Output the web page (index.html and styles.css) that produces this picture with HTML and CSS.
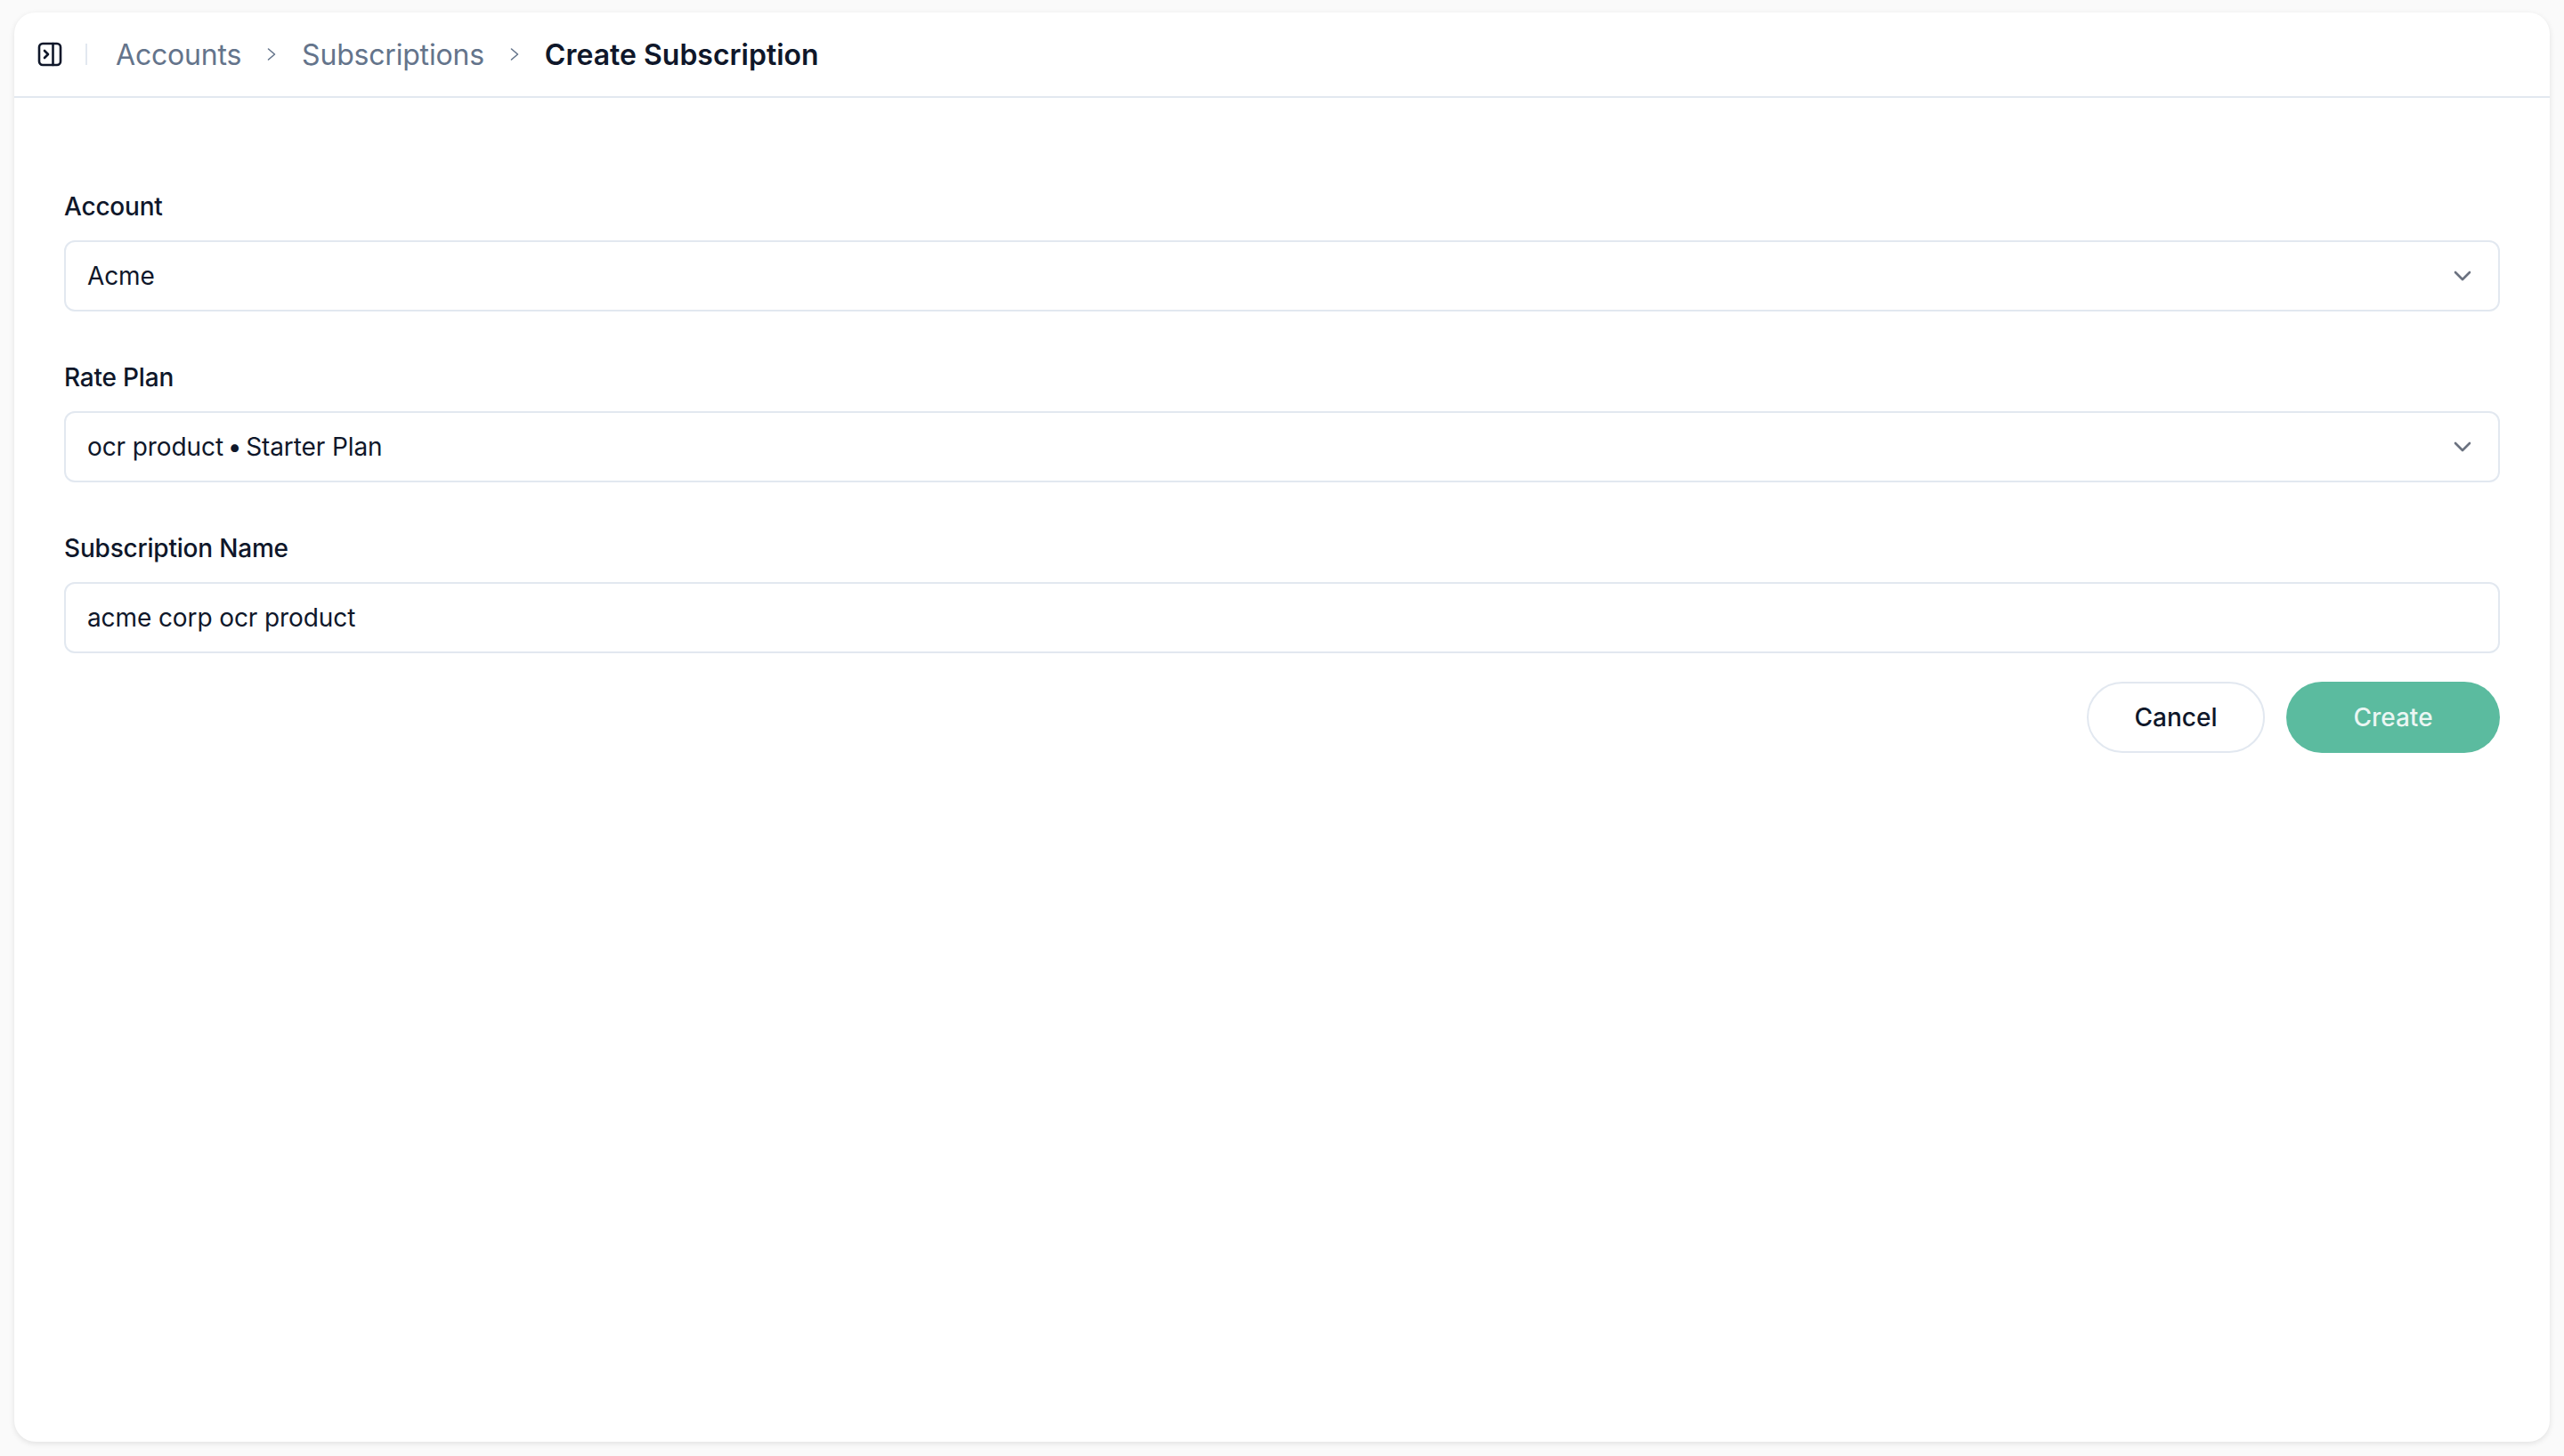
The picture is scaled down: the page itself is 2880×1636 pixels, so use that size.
FILE: index.html
```html
<!DOCTYPE html>
<html lang="en">
<head>
<meta charset="utf-8">
<title>Create Subscription</title>
<link rel="stylesheet" href="styles.css">
</head>
<body>
<main class="panel">
  <header class="topbar">
    <svg class="toggle" width="28" height="28" viewBox="0 0 28 28" fill="none" stroke="#0f172a" stroke-width="2.6" stroke-linecap="round" stroke-linejoin="round"><rect x="2" y="2" width="24" height="24" rx="4"/><path d="M17.5 2v24"/><path d="M8 10l4 4-4 4"/></svg>
    <span class="sep"></span>
    <nav class="crumbs">
      <a class="crumb">Accounts</a>
      <svg class="chev" width="16" height="16" viewBox="0 0 16 16" fill="none" stroke="#64748b" stroke-width="1.6" stroke-linecap="round" stroke-linejoin="round"><path d="M4.5 2l7 6-7 6"/></svg>
      <a class="crumb">Subscriptions</a>
      <svg class="chev" width="16" height="16" viewBox="0 0 16 16" fill="none" stroke="#64748b" stroke-width="1.6" stroke-linecap="round" stroke-linejoin="round"><path d="M4.5 2l7 6-7 6"/></svg>
      <span class="crumb current">Create Subscription</span>
    </nav>
  </header>
  <form class="form">
    <div class="field">
      <label class="label">Account</label>
      <div class="control"><span>Acme</span>
        <svg width="20" height="12" viewBox="0 0 20 12" fill="none" stroke="#6b7280" stroke-width="2.6" stroke-linecap="round" stroke-linejoin="round"><path d="M2 2l8 8 8-8"/></svg></div>
    </div>
    <div class="field">
      <label class="label">Rate Plan</label>
      <div class="control"><span>ocr product <span class="dot">•</span> Starter Plan</span>
        <svg width="20" height="12" viewBox="0 0 20 12" fill="none" stroke="#6b7280" stroke-width="2.6" stroke-linecap="round" stroke-linejoin="round"><path d="M2 2l8 8 8-8"/></svg></div>
    </div>
    <div class="field">
      <label class="label">Subscription Name</label>
      <div class="control"><span>acme corp ocr product</span></div>
    </div>
    <div class="actions">
      <button type="button" class="btn cancel">Cancel</button>
      <button type="button" class="btn create">Create</button>
    </div>
  </form>
</main>
</body>
</html>
```
FILE: styles.css
```css
* { box-sizing: border-box; }
html, body { height: 100%; }
body {
  margin: 0;
  padding: 14px 16px 16px;
  background: #fafafa;
  font-family: "Inter", "Noto Sans", sans-serif;
  color: #0f172a;
}
.panel {
  height: 100%;
  background: #fff;
  border-radius: 24px;
  box-shadow: 0 2px 6px rgba(0,0,0,.1);
  display: flex;
  flex-direction: column;
}
.topbar {
  height: 96px;
  flex: none;
  display: flex;
  align-items: center;
  padding-left: 26px;
  border-bottom: 2px solid #e2e8f0;
}
.toggle { flex: none; }
.sep { width: 2px; height: 24px; background: #e2e8f0; margin: 0 32px 0 26px; }
.crumbs { display: flex; align-items: center; }
.crumb { font-size: 32px; color: #64748b; letter-spacing: -0.2px; }
.crumb.current { color: #0f172a; font-weight: 600; letter-spacing: 0; }
.chev { margin: 0 26px; }
.form { padding: 102px 56px 0; display: flex; flex-direction: column; gap: 54px; }
.field { display: flex; flex-direction: column; gap: 18px; }
.label { font-size: 28px; font-weight: 500; line-height: 40px; letter-spacing: -0.2px; }
.control {
  height: 80px;
  border: 2px solid #e2e8f0;
  border-radius: 12px;
  padding: 0 30px 0 24px;
  display: flex;
  align-items: center;
  justify-content: space-between;
  font-size: 28px;
  letter-spacing: -0.1px;
}
.dot { margin: 0 -3px; }
.actions { display: flex; justify-content: flex-end; gap: 24px; margin-top: -22px; }
.btn { height: 80px; border-radius: 40px; font: 500 28px "Inter", sans-serif; }
.cancel { width: 200px; background: #fff; border: 2px solid #e2e8f0; color: #0f172a; }
.create { width: 240px; background: #5bbb9f; border: 0; color: rgba(255,255,255,.88); }
```
